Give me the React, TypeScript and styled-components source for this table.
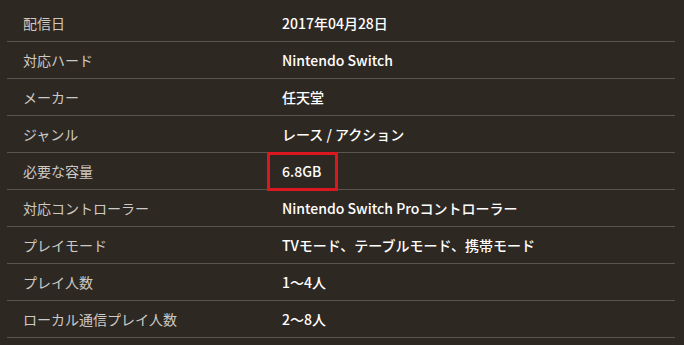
import React from "react";
import styled, { createGlobalStyle } from "styled-components";

const Global = createGlobalStyle`
  html, body {
    margin: 0;
    padding: 0;
    background: #2e2823;
  }
  body {
    font-family: "Noto Sans CJK JP", "Noto Sans", sans-serif;
    -webkit-font-smoothing: antialiased;
  }
`;

const Page = styled.div`
  width: 684px;
  height: 345px;
  padding: 5px 9px 0 7px;
  box-sizing: border-box;
  background: #2e2823;
  overflow: hidden;
`;

const Table = styled.div`
  position: relative;
  display: flex;
  flex-direction: column;
`;

const Row = styled.div`
  display: grid;
  grid-template-columns: 259px 1fr;
  height: 37px;
  align-items: center;
  border-bottom: 1px solid #5b5550;
  box-sizing: border-box;
`;

const Label = styled.div`
  padding-left: 16px;
  font-size: 14px;
  color: #cdc9c5;
  white-space: nowrap;
`;

const Value = styled.div`
  padding-left: 16px;
  font-size: 14px;
  font-weight: 500;
  color: #ffffff;
  white-space: nowrap;
`;

/* Red call-out frame drawn over the storage row */
const Highlight = styled.div<{ $top: number }>`
  position: absolute;
  left: 260px;
  top: ${(p) => p.$top}px;
  width: 71px;
  height: 39px;
  border: 3.5px solid #dd1720;
  box-sizing: border-box;
  pointer-events: none;
`;

const specs: [string, string][] = [
  ["配信日", "2017年04月28日"],
  ["対応ハード", "Nintendo Switch"],
  ["メーカー", "任天堂"],
  ["ジャンル", "レース / アクション"],
  ["必要な容量", "6.8GB"],
  ["対応コントローラー", "Nintendo Switch Proコントローラー"],
  ["プレイモード", "TVモード、テーブルモード、携帯モード"],
  ["プレイ人数", "1〜4人"],
  ["ローカル通信プレイ人数", "2〜8人"],
];

export default function App() {
  return (
    <>
      <Global />
      <Page>
        <Table>
          {specs.map(([k, v]) => (
            <Row key={k}>
              <Label>{k}</Label>
              <Value>{v}</Value>
            </Row>
          ))}
          <Highlight $top={147} />
        </Table>
      </Page>
    </>
  );
}
